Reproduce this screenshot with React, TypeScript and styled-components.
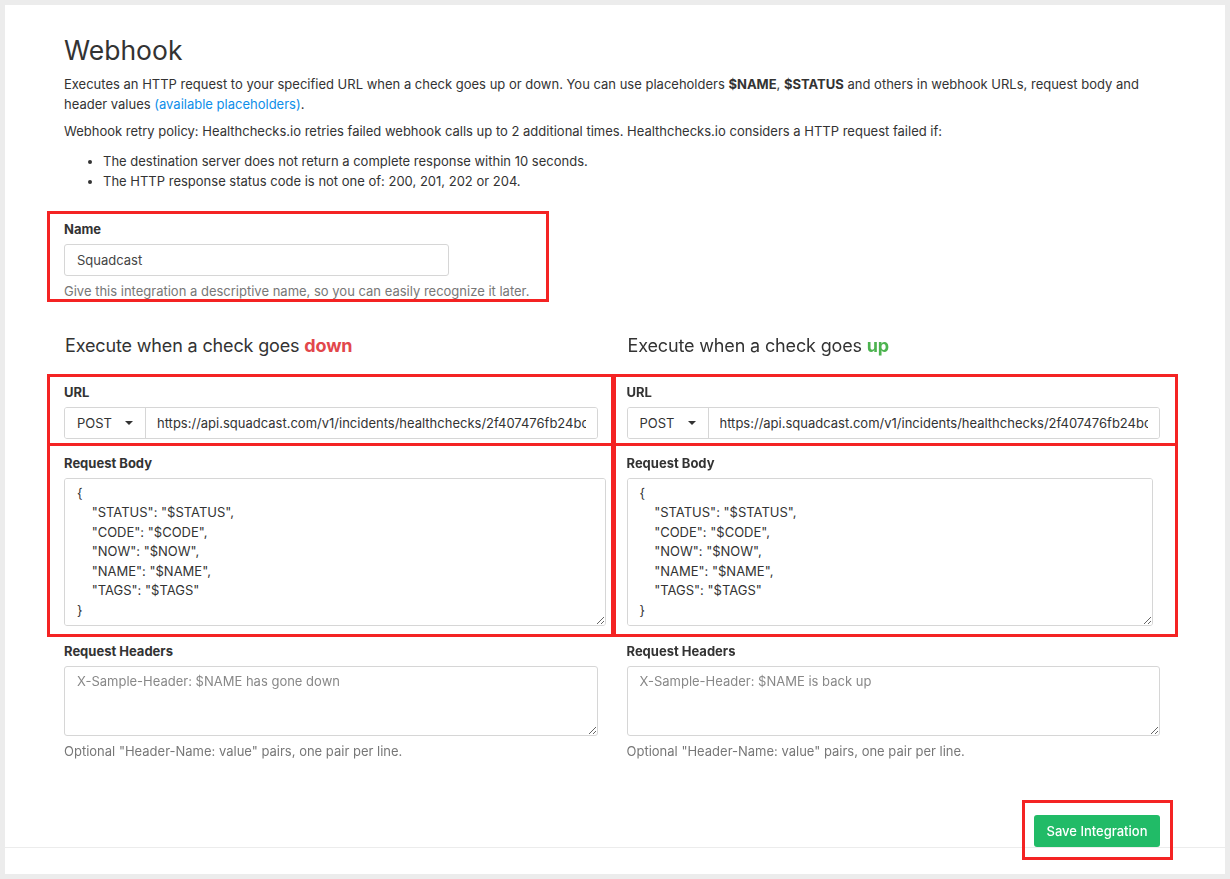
import React from "react";
import styled, { createGlobalStyle } from "styled-components";

const Global = createGlobalStyle`
  html, body { margin: 0; padding: 0; background: #ececec; }
  body { font-family: Inter, "Noto Sans", "Liberation Sans", sans-serif; color: #333; font-size: 13px; }
  * { box-sizing: border-box; }
`;

const Panel = styled.div`
  margin: 5px;
  height: 869px;
  background: #fff;
  display: flex;
  flex-direction: column;
`;

const Content = styled.div`
  padding: 30px 65px 0 59px;
`;

const Title = styled.h1`
  margin: 0;
  font-size: 26.5px;
  line-height: 30px;
  font-weight: 400;
  color: #333;
`;

const Para = styled.p<{ $mt: number }>`
  margin: ${(p) => p.$mt}px 0 0;
  font-size: 13px;
  line-height: 19.5px;
`;

const Link = styled.a`
  color: #0e8ee9;
  text-decoration: none;
`;

const List = styled.ul`
  margin: 9px 0 0;
  padding-left: 39px;
  font-size: 13px;
  line-height: 20px;
`;

const Highlight = styled.div<{ $ml: number; $mr: number; $pt: number; $pb: number; $pl: number; $noTop?: boolean }>`
  border: 3px solid #f42323;
  border-top-width: ${(p) => (p.$noTop ? 0 : 3)}px;
  margin-left: ${(p) => p.$ml}px;
  margin-right: ${(p) => p.$mr}px;
  padding: ${(p) => p.$pt}px 0 ${(p) => p.$pb}px ${(p) => p.$pl}px;
`;

const NameBox = styled(Highlight)`
  width: 502px;
  margin-top: 20px;
`;

const Label = styled.div`
  font-weight: 700;
  font-size: 13px;
  line-height: 19px;
  color: #333;
`;

const TextInput = styled.input`
  display: block;
  margin-top: 5px;
  width: 385px;
  height: 32px;
  border: 1px solid #d6d6d6;
  border-radius: 3px;
  padding: 0 12px;
  font-family: inherit;
  font-size: 13px;
  color: #444;
  outline: none;
`;

const Help = styled.div<{ $mt?: number }>`
  margin-top: ${(p) => p.$mt ?? 7}px;
  font-size: 13px;
  line-height: 16px;
  color: #777;
`;

const Columns = styled.div`
  display: grid;
  grid-template-columns: 1fr 1fr;
  column-gap: 29px;
  margin-top: 32px;
`;

const Column = styled.div`
  display: flex;
  flex-direction: column;
  min-width: 0;
`;

const SectionTitle = styled.h2`
  margin: 0 0 16px;
  font-size: 18px;
  letter-spacing: -0.15px;
  line-height: 24px;
  font-weight: 400;
  color: #333;
  padding-left: 1px;
`;

const State = styled.b<{ $color: string }>`
  color: ${(p) => p.$color};
  font-weight: 700;
`;

const InputGroup = styled.div<{ $w: number }>`
  display: flex;
  margin-top: 5px;
  width: ${(p) => p.$w}px;
  height: 32px;
  border: 1px solid #d6d6d6;
  border-radius: 3px;
  overflow: hidden;
`;

const MethodButton = styled.div`
  flex: 0 0 81px;
  display: flex;
  align-items: center;
  justify-content: space-between;
  padding: 0 12px 0 12px;
  border-right: 1px solid #d6d6d6;
  background: #fff;
  font-size: 13px;
  color: #333;
`;

const Caret = styled.span`
  width: 0;
  height: 0;
  border-left: 4px solid transparent;
  border-right: 4px solid transparent;
  border-top: 4px solid #333;
  margin-top: 1px;
`;

const UrlInput = styled.input`
  flex: 1;
  min-width: 0;
  border: none;
  padding: 0 11px;
  font-family: inherit;
  font-size: 13px;
  color: #333;
  outline: none;
`;

const Area = styled.textarea<{ $w: number; $h: number }>`
  display: block;
  margin-top: 5px;
  width: ${(p) => p.$w}px;
  height: ${(p) => p.$h}px;
  border: 1px solid #d6d6d6;
  border-radius: 3px;
  padding: 5px 12px;
  font-family: inherit;
  font-size: 13px;
  line-height: 19.5px;
  color: #333;
  outline: none;
  resize: vertical;
  &::placeholder { color: #888; }
`;

const HeadersLabel = styled(Label)`
  margin-top: 5px;
`;

const ButtonRow = styled.div`
  margin-top: auto;
  display: flex;
  justify-content: flex-end;
  padding-right: 52px;
`;

const ButtonBox = styled.div`
  position: relative;
  z-index: 1;
  border: 3px solid #f42323;
  padding: 12px 10px 10px 9px;
  margin-bottom: -13px;
`;

const SaveButton = styled.button`
  display: block;
  width: 126px;
  height: 32px;
  border: none;
  border-radius: 3px;
  background: #21bb67;
  color: #fff;
  font-family: inherit;
  font-size: 13px;
  font-weight: 500;
`;

const Footer = styled.div`
  height: 27px;
  border-top: 1px solid #ececec;
  flex-shrink: 0;
`;

const body = `{
    "STATUS": "$STATUS",
    "CODE": "$CODE",
    "NOW": "$NOW",
    "NAME": "$NAME",
    "TAGS": "$TAGS"
}`;

const URL = "https://api.squadcast.com/v1/incidents/healthchecks/2f407476fb24bc0d2c71e9a";

type Side = {
  word: string;
  color: string;
  ml: number;
  mr: number;
  pl: number;
  urlW: number;
  bodyW: number;
  headW: number;
  placeholder: string;
};

const sides: Side[] = [
  { word: "down", color: "#e2474b", ml: -17, mr: -16, pl: 14, urlW: 534, bodyW: 542, headW: 534, placeholder: "X-Sample-Header: $NAME has gone down" },
  { word: "up", color: "#4cb34f", ml: -14, mr: -18, pl: 11, urlW: 533, bodyW: 526, headW: 533, placeholder: "X-Sample-Header: $NAME is back up" },
];

export default function App() {
  return (
    <>
      <Global />
      <Panel>
        <Content>
          <Title>Webhook</Title>
          <Para $mt={10}>
            Executes an HTTP request to your specified URL when a check goes up or down. You can use placeholders{" "}
            <b>$NAME</b>, <b>$STATUS</b> and others in webhook URLs, request body and header values{" "}
            <Link href="#">(available placeholders)</Link>.
          </Para>
          <Para $mt={8}>
            Webhook retry policy: Healthchecks.io retries failed webhook calls up to 2 additional times. Healthchecks.io
            considers a HTTP request failed if:
          </Para>
          <List>
            <li>The destination server does not return a complete response within 10 seconds.</li>
            <li>The HTTP response status code is not one of: 200, 201, 202 or 204.</li>
          </List>
          <NameBox $ml={-17} $mr={0} $pt={6} $pb={0} $pl={14}>
            <Label>Name</Label>
            <TextInput defaultValue="Squadcast" />
            <Help>Give this integration a descriptive name, so you can easily recognize it later.</Help>
          </NameBox>
          <Columns>
            {sides.map((s) => (
              <Column key={s.word}>
                <SectionTitle>
                  Execute when a check goes <State $color={s.color}>{s.word}</State>
                </SectionTitle>
                <Highlight $ml={s.ml} $mr={s.mr} $pt={6} $pb={4} $pl={s.pl}>
                  <Label>URL</Label>
                  <InputGroup $w={s.urlW}>
                    <MethodButton>
                      POST <Caret />
                    </MethodButton>
                    <UrlInput defaultValue={URL} />
                  </InputGroup>
                </Highlight>
                <Highlight $ml={s.ml} $mr={s.mr} $pt={8} $pb={8} $pl={s.pl} $noTop>
                  <Label>Request Body</Label>
                  <Area $w={s.bodyW} $h={148} defaultValue={body} />
                </Highlight>
                <HeadersLabel>Request Headers</HeadersLabel>
                <Area $w={s.headW} $h={70} placeholder={s.placeholder} />
                <Help>Optional "Header-Name: value" pairs, one pair per line.</Help>
              </Column>
            ))}
          </Columns>
        </Content>
        <ButtonRow>
          <ButtonBox>
            <SaveButton>Save Integration</SaveButton>
          </ButtonBox>
        </ButtonRow>
        <Footer />
      </Panel>
    </>
  );
}
